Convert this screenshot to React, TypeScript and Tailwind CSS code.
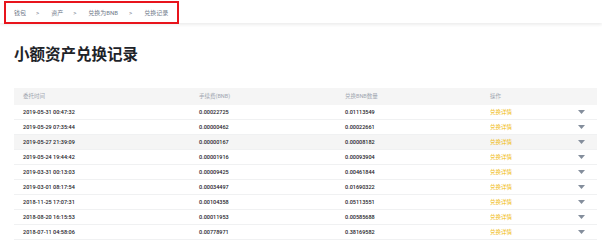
import React from 'react';

const rows = [
    ['2019-05-31 00:47:32', '0.00022725', '0.01113549'],
    ['2019-05-29 07:35:44', '0.00000462', '0.00022661'],
    ['2019-05-27 21:39:09', '0.00000167', '0.00008182'],
    ['2019-05-24 19:44:42', '0.00001916', '0.00093904'],
    ['2019-03-31 00:13:03', '0.00009425', '0.00461844'],
    ['2019-03-01 08:17:54', '0.00034497', '0.01690322'],
    ['2018-11-25 17:07:31', '0.00104358', '0.05113551'],
    ['2018-08-20 16:15:53', '0.00011953', '0.00585688'],
    ['2018-07-11 04:58:06', '0.00778971', '0.38169582'],
];

const font = { fontFamily: '"Roboto", "Noto Sans CJK SC", sans-serif' };

const Caret: React.FC = () => (
    <svg width="7" height="4" viewBox="0 0 7 4" className="block">
        <path d="M0 0 H7 L3.5 4 Z" fill="#848e9c" />
    </svg>
);

const App: React.FC = () => {
    return (
        <div className="w-[602px] h-[246px] bg-white overflow-hidden" style={font}>
            <div className="h-[23px] pl-[4px] pt-[1px] shadow-[0_2px_3px_rgba(0,0,0,0.07)] relative">
                <div className="flex items-center h-[23px] w-[175px] border-2 border-[#e8141c] pl-[8px] text-[6px] text-[#707a8a] whitespace-nowrap">
                    <span>钱包</span>
                    <span className="ml-[10px]">&gt;</span>
                    <span className="ml-[12px]">资产</span>
                    <span className="ml-[10px]">&gt;</span>
                    <span className="ml-[12px]">兑换为BNB</span>
                    <span className="ml-[11px]">&gt;</span>
                    <span className="ml-[12px]">兑换记录</span>
                </div>
            </div>

            <h1 className="mt-[22px] ml-[14px] text-[15.5px] leading-[20px] font-bold text-[#1e2329]">小额资产兑换记录</h1>

            <div className="mt-[23px] ml-[14px] w-[583px]">
                <div className="flex items-center h-[17px] bg-[#f5f5f5] text-[5.5px] text-[#a0a6b0]">
                    <div className="w-[185px] pl-[9px]">委托时间</div>
                    <div className="w-[146px]">手续费(BNB)</div>
                    <div className="w-[145px]">兑换BNB数量</div>
                    <div>操作</div>
                </div>
                {rows.map((r, i) => (
                    <div
                        key={r[0]}
                        className={`flex items-center h-[15px] border-b border-[#f0f1f2] text-[5.5px] font-medium text-[#1e2329] ${i === 2 ? 'bg-[#f5f5f5]' : ''}`}
                    >
                        <div className="w-[185px] pl-[9px]">{r[0]}</div>
                        <div className="w-[146px]">{r[1]}</div>
                        <div className="w-[145px]">{r[2]}</div>
                        <div className="w-[88px] text-[#f0b90b] font-normal">兑换详情</div>
                        <Caret />
                    </div>
                ))}
            </div>
        </div>
    );
};

export default App;
